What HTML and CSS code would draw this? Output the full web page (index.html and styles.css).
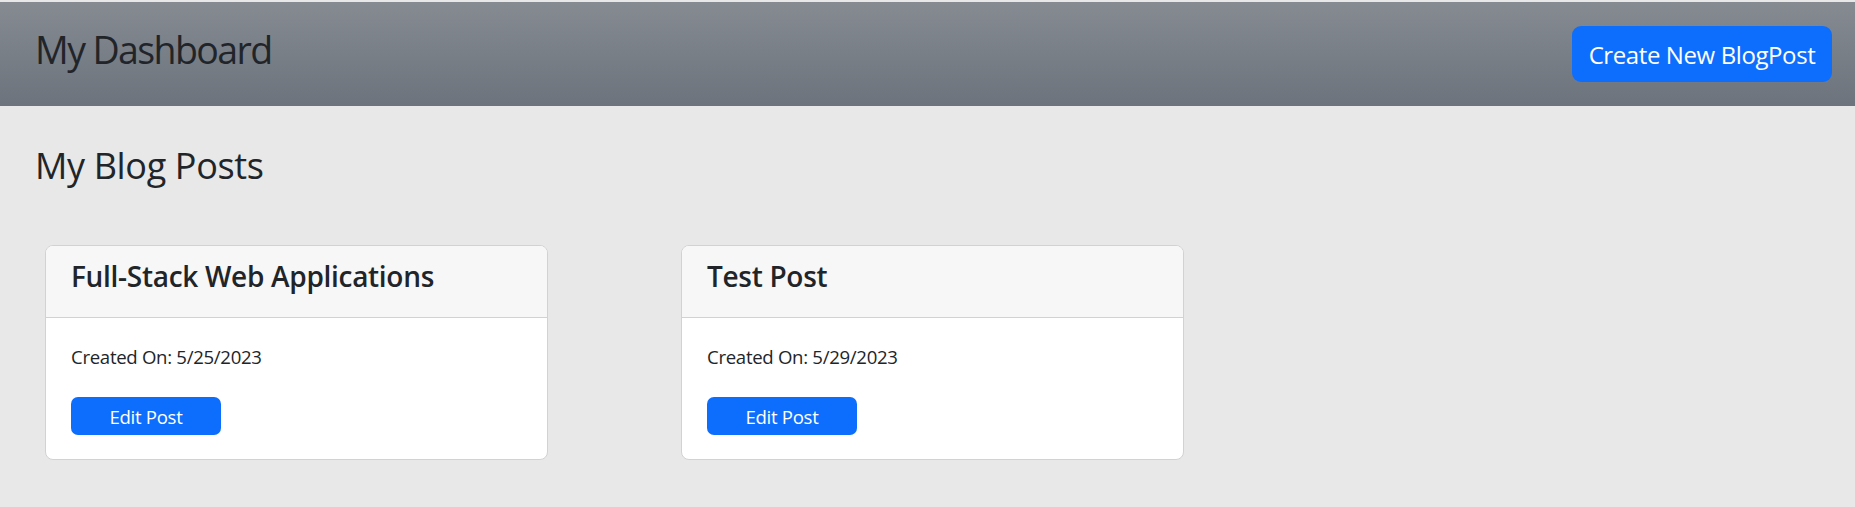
FILE: index.html
```html
<!DOCTYPE html>
<html lang="en">
<head>
<meta charset="utf-8">
<title>My Dashboard</title>
<link rel="stylesheet" href="styles.css">
</head>
<body>
  <header class="topbar">
    <h1 class="topbar-title">My Dashboard</h1>
    <button class="btn btn-lg">Create New BlogPost</button>
  </header>
  <main class="content">
    <h2 class="section-title">My Blog Posts</h2>
    <div class="cards">
      <div class="card">
        <div class="card-header"><h3 class="card-title">Full-Stack Web Applications</h3></div>
        <div class="card-body">
          <p class="card-date">Created On: 5/25/2023</p>
          <button class="btn btn-edit">Edit Post</button>
        </div>
      </div>
      <div class="card">
        <div class="card-header"><h3 class="card-title">Test Post</h3></div>
        <div class="card-body">
          <p class="card-date">Created On: 5/29/2023</p>
          <button class="btn btn-edit">Edit Post</button>
        </div>
      </div>
    </div>
  </main>
</body>
</html>
```
FILE: styles.css
```css
* { box-sizing: border-box; }

body {
  margin: 0;
  padding-top: 2px;
  background: #e8e8e8;
  color: #212529;
  font-family: "Open Sans", "Noto Sans", sans-serif;
  font-size: 19px;
}

.topbar {
  height: 104px;
  display: flex;
  align-items: center;
  justify-content: space-between;
  padding: 0 23px 0 35px;
  background: linear-gradient(180deg, #868b92 0%, #6c737c 100%);
}

.topbar-title {
  margin: 0 0 10px 0;
  font-size: 37.5px;
  font-weight: 500;
  line-height: 1.2;
  letter-spacing: -1.6px;
}

.btn {
  border: 0;
  background: #0d6efd;
  color: #fff;
  font-family: inherit;
  cursor: pointer;
}

.btn-lg {
  width: 260px;
  height: 56px;
  border-radius: 9px;
  font-size: 24px;
  letter-spacing: -0.4px;
}

.content {
  padding: 0 0 0 35px;
}

.section-title {
  margin: 0;
  padding-top: 38px;
  font-size: 36px;
  font-weight: 500;
  line-height: 1.2;
  letter-spacing: -0.35px;
}

.cards {
  display: flex;
  gap: 133px;
  padding: 58px 0 0 10px;
}

.card {
  width: 503px;
  background: #fff;
  border: 1px solid #d2d2d2;
  border-radius: 8px;
  overflow: hidden;
}

.card-header {
  height: 72px;
  padding: 14px 25px 0 25px;
  background: #f7f7f7;
  border-bottom: 1px solid #d2d2d2;
}

.card-title {
  margin: 0;
  font-size: 28px;
  font-weight: 600;
  line-height: 1.2;
  letter-spacing: -0.3px;
}

.card-body {
  padding: 25px 25px 24px 25px;
}

.card-date {
  margin: 0 0 26px 0;
  font-size: 18.6px;
  line-height: 1.5;
  letter-spacing: -0.3px;
}

.btn-edit {
  display: block;
  width: 150px;
  height: 38px;
  border-radius: 7px;
  font-size: 18.6px;
  letter-spacing: -0.3px;
}
```
